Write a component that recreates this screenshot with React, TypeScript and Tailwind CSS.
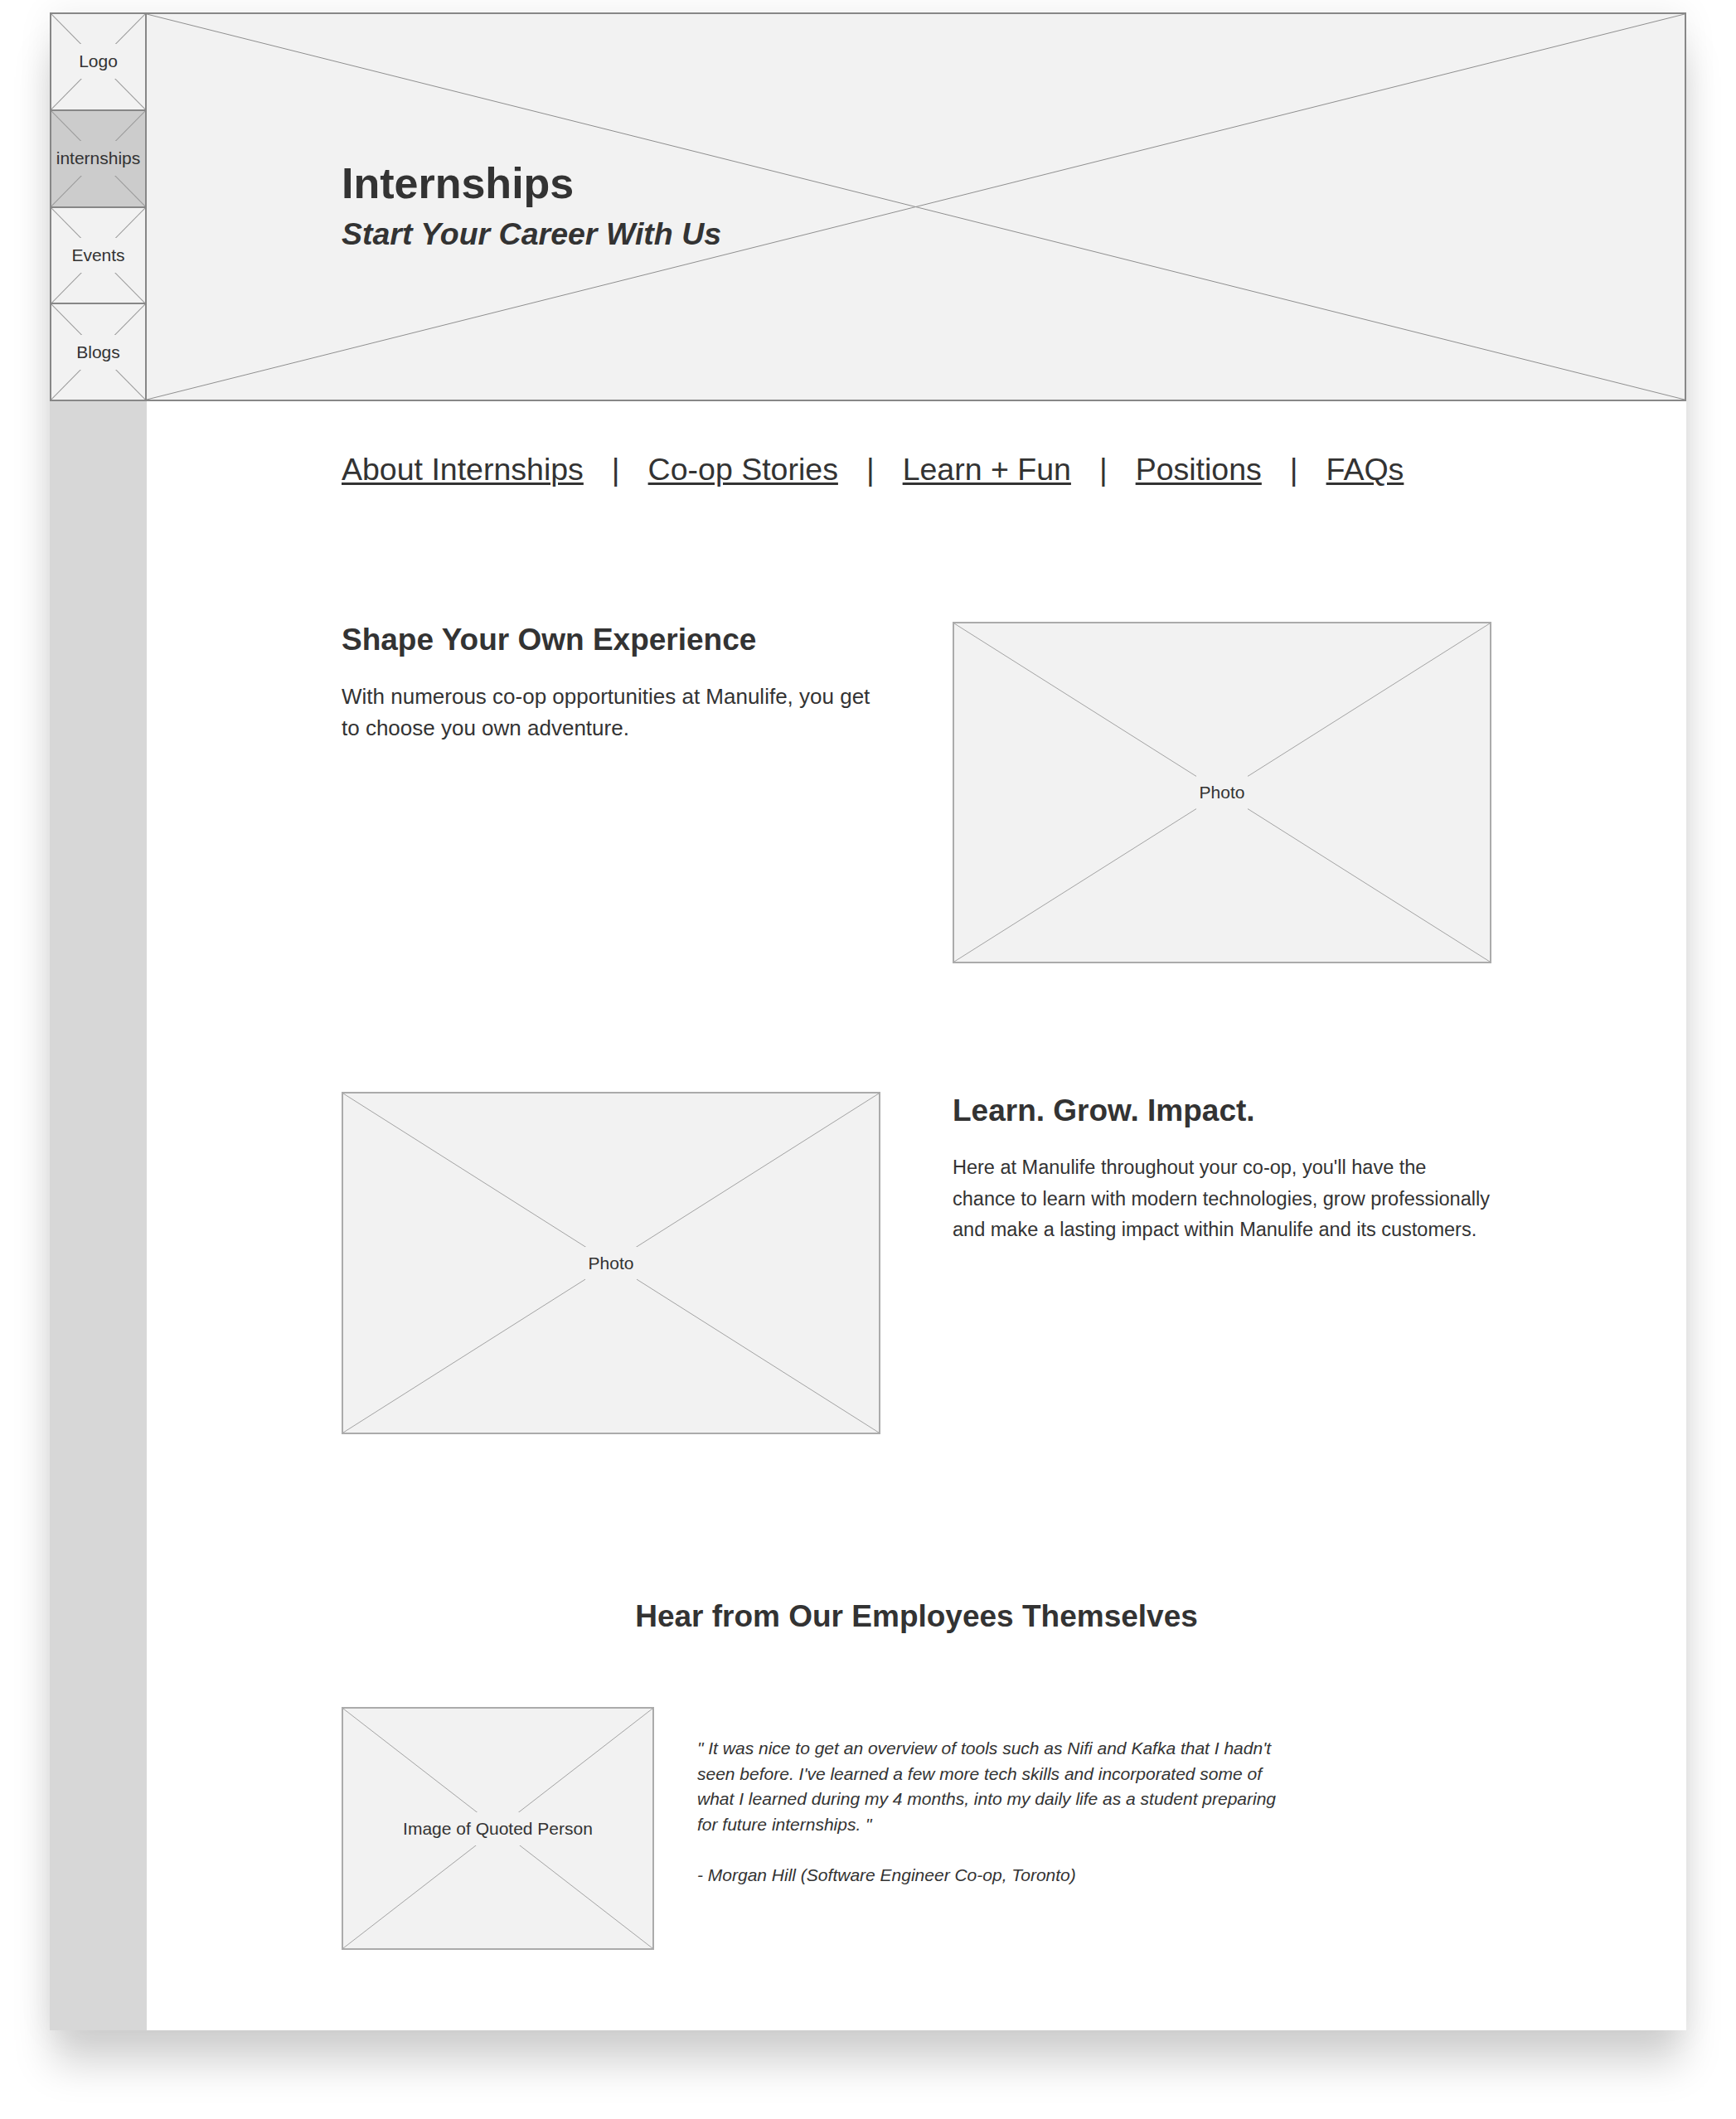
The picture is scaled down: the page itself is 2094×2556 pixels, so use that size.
import React from "react";

const FONT = "font-['Liberation_Sans',Arial,Helvetica,sans-serif]";

function Cross({ color }: { color: string }) {
  return (
    <svg
      className="absolute inset-0 h-full w-full"
      viewBox="0 0 100 100"
      preserveAspectRatio="none"
      aria-hidden="true"
    >
      <line x1="0" y1="0" x2="100" y2="100" stroke={color} strokeWidth="1" vectorEffect="non-scaling-stroke" />
      <line x1="100" y1="0" x2="0" y2="100" stroke={color} strokeWidth="1" vectorEffect="non-scaling-stroke" />
    </svg>
  );
}

function NavBox({ label, active }: { label: string; active?: boolean }) {
  return (
    <div
      className={`relative flex flex-1 items-center justify-center border-b-2 border-[#878787] ${
        active ? "bg-[#cccccc]" : "bg-[#f2f2f2]"
      }`}
    >
      <Cross color="#9a9a9a" />
      <span
        className={`relative px-1 py-[9px] text-[21px] leading-[24px] text-[#333333] ${
          active ? "bg-[#cccccc]" : "bg-[#f2f2f2]"
        }`}
      >
        {label}
      </span>
    </div>
  );
}

function Photo({ label, className }: { label: string; className: string }) {
  return (
    <div className={`relative flex items-center justify-center border-2 border-[#ababab] bg-[#f2f2f2] ${className}`}>
      <Cross color="#a3a3a3" />
      <span className="relative bg-[#f2f2f2] px-1 py-[8px] text-[21px] leading-[24px] text-[#333333]">{label}</span>
    </div>
  );
}

const links = ["About Internships", "Co-op Stories", "Learn + Fun", "Positions", "FAQs"];

export default function App() {
  return (
    <div className={`${FONT} h-[2556px] w-[2094px] overflow-hidden bg-white pl-[60px] pt-[15px]`}>
      <div className="flex h-[2434px] w-[1973px] shadow-[0_45px_45px_-4px_rgba(0,0,0,0.17),0_0_40px_rgba(0,0,0,0.07)]">
        {/* Sidebar */}
        <div className="flex w-[117px] shrink-0 flex-col bg-[#d7d7d7]">
          <div className="flex h-[469px] flex-col border-x-2 border-t-2 border-[#878787]">
            <NavBox label="Logo" />
            <NavBox label="internships" active />
            <NavBox label="Events" />
            <NavBox label="Blogs" />
          </div>
        </div>

        {/* Main */}
        <div className="flex flex-1 flex-col bg-white">
          {/* Banner */}
          <div className="relative -ml-[2px] flex h-[469px] flex-col justify-center border-2 border-[#878787] bg-[#f2f2f2] pl-[235px]">
            <Cross color="#8f8f8f" />
            <div className="relative -mt-[4px] text-[#333333]">
              <h1 className="text-[52px] font-bold leading-[60px]">Internships</h1>
              <p className="mt-[9px] text-[37.5px] font-bold italic leading-[44px]">Start Your Career With Us</p>
            </div>
          </div>

          <div className="flex flex-col px-[235px] text-[#333333]">
            {/* Top nav */}
            <nav className="mt-[60px] flex items-center gap-[34px] text-[37.5px] leading-[44px]">
              {links.map((l, i) => (
                <React.Fragment key={l}>
                  {i > 0 && <span>|</span>}
                  <a className="underline decoration-[2.5px] underline-offset-[3px]">{l}</a>
                </React.Fragment>
              ))}
            </nav>

            {/* Section 1 */}
            <section className="mt-[162px] grid grid-cols-[650px_650px] gap-x-[87px]">
              <div>
                <h2 className="text-[37px] font-bold leading-[44px]">Shape Your Own Experience</h2>
                <p className="mt-[27px] text-[26px] leading-[38px]">
                  With numerous co-op opportunities at Manulife, you get
                  <br />
                  to choose you own adventure.
                </p>
              </div>
              <Photo label="Photo" className="h-[412px] w-[650px]" />
            </section>

            {/* Section 2 */}
            <section className="mt-[155px] grid grid-cols-[650px_650px] gap-x-[87px]">
              <Photo label="Photo" className="h-[413px] w-[650px]" />
              <div>
                <h2 className="mt-[1px] text-[37px] font-bold leading-[44px]">Learn. Grow. Impact.</h2>
                <p className="mt-[28px] text-[23.5px] leading-[37.5px]">
                  Here at Manulife throughout your co-op, you'll have the
                  <br />
                  chance to learn with modern technologies, grow professionally
                  <br />
                  and make a lasting impact within Manulife and its customers.
                </p>
              </div>
            </section>

            {/* Section 3 */}
            <h2 className="mt-[198px] text-center text-[37px] font-bold leading-[44px]">
              Hear from Our Employees Themselves
            </h2>

            <div className="mt-[87px] flex items-start gap-[52px]">
              <Photo label="Image of Quoted Person" className="h-[293px] w-[377px] shrink-0" />
              <div className="mt-[35px] w-[715px] text-[21px] italic leading-[30.5px]">
                <p>
                  " It was nice to get an overview of tools such as Nifi and Kafka that I hadn't
                  <br />
                  seen before. I've learned a few more tech skills and incorporated some of
                  <br />
                  what I learned during my 4 months, into my daily life as a student preparing
                  <br />
                  for future internships. "
                </p>
                <p className="mt-[30.5px]">- Morgan Hill (Software Engineer Co-op, Toronto)</p>
              </div>
            </div>
          </div>
        </div>
      </div>
    </div>
  );
}
